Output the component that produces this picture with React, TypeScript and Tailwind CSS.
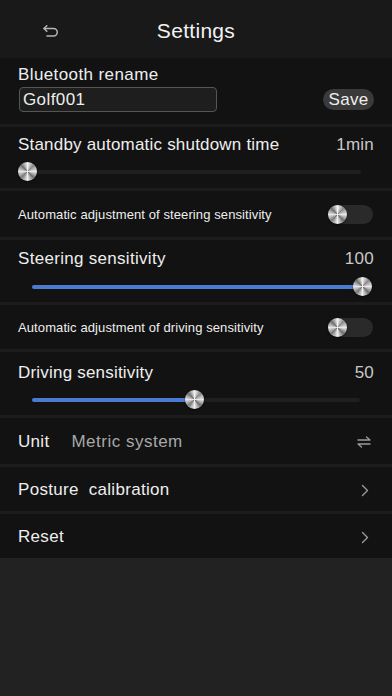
import React from "react";

const font = { fontFamily: '"Liberation Sans", Arial, sans-serif' };

function Thumb() {
  return (
    <div className="h-[19px] w-[19px] rounded-full bg-[conic-gradient(from_0deg,#f2f2f2,#8a8a8a,#e8e8e8,#6e6e6e,#f0f0f0,#7a7a7a,#e6e6e6,#707070,#f2f2f2)] shadow-[0_1px_2px_rgba(0,0,0,0.6)]" />
  );
}

function Divider() {
  return <div className="h-[3px] bg-[#1c1c1c]" />;
}

function Slider({ left, right, pct, blue }: { left: number; right: number; pct: number; blue: boolean }) {
  const width = right - left;
  const pos = (width * pct) / 100;
  return (
    <div className="relative h-[20px]" style={{ marginLeft: left, width }}>
      <div className="absolute left-0 right-0 top-[8px] h-[4px] rounded-full bg-[#1f1f1f]" />
      {blue && (
        <div className="absolute left-0 top-[8px] h-[4px] rounded-full bg-[#4a7bd0]" style={{ width: pos }} />
      )}
      <div className="absolute top-0" style={{ left: pos - 9.5 }}>
        <Thumb />
      </div>
    </div>
  );
}

function Toggle() {
  return (
    <div className="flex h-[19px] w-[45px] items-center rounded-full bg-[#2a2a2a]">
      <Thumb />
    </div>
  );
}

function Chevron() {
  return (
    <svg width="8" height="13" viewBox="0 0 8 13" fill="none" stroke="#9a9a9a" strokeWidth="1.4" strokeLinecap="round" strokeLinejoin="round">
      <path d="M1.5 1.5l5 5-5 5" />
    </svg>
  );
}

export default function App() {
  return (
    <div className="min-h-[696px] w-[392px] bg-[#222222] text-[#eeeeee]" style={font}>
      {/* Header */}
      <div className="relative flex h-[58px] items-center justify-center bg-[#191919] pt-[4px]">
        <svg className="absolute left-[42px] top-[25px]" width="17" height="12" viewBox="0 0 17 12" fill="none" stroke="#b5b5b5" strokeWidth="1.5" strokeLinecap="round" strokeLinejoin="round">
          <path d="M2 3.5h9.5a3.75 3.75 0 0 1 0 7.5H5" />
          <path d="M4.8 0.8L2 3.5 4.8 6.2" />
        </svg>
        <span className="text-[21px] tracking-[0.3px] text-[#f2f2f2]">Settings</span>
      </div>

      <div className="bg-[#121212]">
        {/* Bluetooth rename */}
        <div className="h-[66px] pl-[18px] pr-[18px] pt-[7px]">
          <div className="text-[17px] leading-[20px] tracking-[0.4px]">Bluetooth rename</div>
          <div className="mt-[2px] flex items-center justify-between">
            <div className="ml-[1px] flex h-[25px] w-[198px] items-center rounded-[4px] border border-[#555555] bg-[#1e1e1e] pl-[3px] pt-[1px] text-[17px] tracking-[0.4px]">
              Golf001
            </div>
            <div className="flex h-[21px] w-[51px] items-center justify-center rounded-full bg-[#3a3a3a] pt-[1px] text-[17px] tracking-[0.3px]">
              Save
            </div>
          </div>
        </div>
        <Divider />

        {/* Standby */}
        <div className="h-[61px] pt-[8px]">
          <div className="flex items-center justify-between pl-[18px] pr-[18px] text-[17px] leading-[20px] tracking-[0.2px]">
            <span>Standby automatic shutdown time</span>
            <span className="text-[#c8c8c8]">1min</span>
          </div>
          <div className="mt-[7px]">
            <Slider left={19} right={361} pct={2.5} blue={false} />
          </div>
        </div>
        <Divider />

        {/* Auto steering */}
        <div className="flex h-[46px] items-center justify-between pl-[18px] pr-[19px]">
          <span className="pt-[1px] text-[13px] tracking-[0.1px]">Automatic adjustment of steering sensitivity</span>
          <Toggle />
        </div>
        <Divider />

        {/* Steering sensitivity */}
        <div className="h-[62px] pt-[9px]">
          <div className="flex items-center justify-between pl-[18px] pr-[18px] text-[17px] leading-[20px] tracking-[0.3px]">
            <span>Steering sensitivity</span>
            <span className="text-[#c8c8c8]">100</span>
          </div>
          <div className="mt-[8px]">
            <Slider left={32} right={362} pct={100} blue={true} />
          </div>
        </div>
        <Divider />

        {/* Auto driving */}
        <div className="flex h-[44px] items-center justify-between pl-[18px] pr-[19px]">
          <span className="pt-[1px] text-[13px] tracking-[0.1px]">Automatic adjustment of driving sensitivity</span>
          <Toggle />
        </div>
        <Divider />

        {/* Driving sensitivity */}
        <div className="h-[63px] pt-[11px]">
          <div className="flex items-center justify-between pl-[18px] pr-[18px] text-[17px] leading-[20px] tracking-[0.2px]">
            <span>Driving sensitivity</span>
            <span className="text-[#c8c8c8]">50</span>
          </div>
          <div className="mt-[7px]">
            <Slider left={32} right={360} pct={49.4} blue={true} />
          </div>
        </div>
        <Divider />

        {/* Unit */}
        <div className="flex h-[46px] items-center justify-between pl-[18px] pr-[21px] pt-[2px] text-[17px] tracking-[0.3px]">
          <div className="flex items-center">
            <span>Unit</span>
            <span className="ml-[22px] tracking-[0.5px] text-[#a8a8a8]">Metric system</span>
          </div>
          <svg width="14" height="12" viewBox="0 0 14 12" fill="none" stroke="#9a9a9a" strokeWidth="1.4" strokeLinecap="round" strokeLinejoin="round">
            <path d="M1 4h12L9.5 1" />
            <path d="M13 8H1l3.5 3" />
          </svg>
        </div>
        <Divider />

        {/* Posture calibration */}
        <div className="flex h-[44px] items-center justify-between pl-[18px] pr-[23px] pt-[2px] text-[17px] tracking-[0.3px]">
          <span>Posture&nbsp; calibration</span>
          <Chevron />
        </div>
        <Divider />

        {/* Reset */}
        <div className="flex h-[44px] items-center justify-between pl-[18px] pr-[23px] pt-[2px] text-[17px] tracking-[0.3px]">
          <span>Reset</span>
          <Chevron />
        </div>
      </div>
      <div className="h-[138px] bg-[#222222]" />
    </div>
  );
}
